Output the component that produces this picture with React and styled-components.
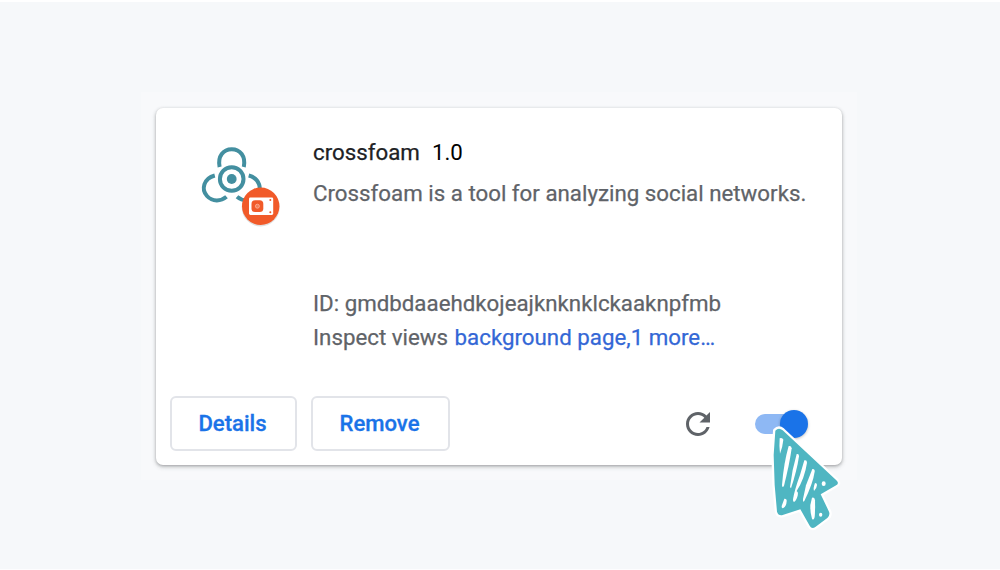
import React from "react";
import styled, { createGlobalStyle } from "styled-components";

const GlobalStyle = createGlobalStyle`
  *, *::before, *::after { box-sizing: border-box; }
  body { margin: 0; background: #fff; font-family: Roboto, "Liberation Sans", sans-serif; }
`;

const Page = styled.main`
  width: 1000px;
  height: 570px;
  border-top: 2px solid #fff;
  border-bottom: 1px solid #fdfdfe;
  background: #f6f8fa;
  display: flex;
  justify-content: center;
  padding: 90px 2px 0 0;
`;

const Backdrop = styled.div`
  width: 716px;
  height: 388px;
  padding: 16px 15px;
  background: #f8f9fb;
`;

const Card = styled.article`
  position: relative;
  height: 357px;
  border-radius: 7px;
  background: #fff;
  box-shadow: 0 1px 3px rgba(60, 64, 67, 0.36), 0 2px 5px rgba(60, 64, 67, 0.2);
  display: flex;
  flex-direction: column;
`;

const Body = styled.div`
  display: flex;
  flex: 1;
  padding: 27px 0 0 37px;
`;

const Logo = styled.svg`
  width: 100px;
  height: 100px;
  margin-left: -3px;
  flex: none;
`;

const Info = styled.div`
  padding-left: 23px;
  color: #5f6368;
  white-space: nowrap;
  font-size: 22.3px;
  -webkit-text-stroke: 0.25px currentColor;
`;

const Line = styled.p`
  margin: 0 0 ${(p) => p.$gap || 0}px;
  height: 34px;
  line-height: 34px;
`;

const Title = styled.h1`
  display: flex;
  gap: 12px;
  margin: 0 0 7px;
  height: 34px;
  line-height: 34px;
  font-size: inherit;
  font-weight: 400;
  color: #202124;
`;

const Version = styled.span`
  color: #000;
  -webkit-text-stroke: 0;
`;

const Link = styled.a`
  margin-left: 1px;
  color: #3367d6;
`;

const Actions = styled.footer`
  display: flex;
  align-items: center;
  gap: 14px;
  height: 55px;
  margin: 0 34px 14px 14px;
`;

const Button = styled.button`
  width: ${(p) => p.$width}px;
  height: 55px;
  padding: 0 2px 2px 0;
  border: 2px solid #e2e4e9;
  border-radius: 6px;
  background: #fff;
  color: #1a73e8;
  font: 500 22.1px/30px Roboto, sans-serif;
  -webkit-text-stroke: 0.3px currentColor;
`;

const Reload = styled.svg`
  width: 36px;
  height: 36px;
  margin-left: auto;
  margin-right: 25px;
`;

const Toggle = styled.div`
  position: relative;
  width: 53px;
  height: 28px;
  display: flex;
  align-items: center;
  justify-content: flex-end;
`;

const Track = styled.span`
  position: absolute;
  left: 0;
  top: 4px;
  width: 46px;
  height: 20px;
  border-radius: 10px;
  background: #8eb8f4;
`;

const Knob = styled.span`
  position: relative;
  width: 28px;
  height: 28px;
  border-radius: 50%;
  background: #1a73e8;
  box-shadow: 0 1px 3px rgba(0, 0, 0, 0.25);
`;

const Cursor = styled.svg`
  position: absolute;
  left: 584px;
  top: 287px;
  width: 120px;
  height: 145px;
`;

function CrossfoamLogo() {
  return (
    <Logo viewBox="0 0 100 100" aria-label="crossfoam">
      <g fill="none" stroke="#438fa0" strokeWidth="4">
        <circle cx="41.7" cy="44" r="11.8" />
        <path d="M29.6 32 C27.4 21 33.5 14.2 41.7 14.2 C50 14.2 56 21 53.8 32" />
        <path d="M24.8 40.5 C13.5 43.5 11 54.5 17 61 C22.5 67 31 66.5 36.5 61.8" />
        <path d="M58.7 40.5 C70 43.5 72.5 54.5 66.5 61 C61 67 52.5 66.5 47 61.8" />
      </g>
      <circle cx="41.7" cy="44" r="4.9" fill="#438fa0" />
      <circle cx="70.7" cy="72.4" r="19" fill="#000" opacity=".12" />
      <circle cx="70.7" cy="71.2" r="18.7" fill="#f15a29" />
      <rect x="59" y="62.4" width="24.2" height="17.6" rx="1.4" fill="#fff" />
      <rect x="61.5" y="65.3" width="11.8" height="11.8" rx="3.6" fill="#f15a29" />
      <circle cx="67.4" cy="71.2" r="2" fill="#f58058" stroke="#fbb49c" strokeWidth=".8" />
      <circle cx="80.3" cy="65" r="1" fill="#f15a29" />
      <circle cx="80.3" cy="77.2" r="1" fill="#f15a29" />
    </Logo>
  );
}

export default function App() {
  return (
    <>
      <GlobalStyle />
      <Page>
        <Backdrop>
          <Card>
            <Body>
              <CrossfoamLogo />
              <Info>
                <Title>
                  <span>crossfoam</span>
                  <Version>1.0</Version>
                </Title>
                <Line $gap={76}>Crossfoam is a tool for analyzing social networks.</Line>
                <Line>ID: gmdbdaaehdkojeajknknklckaaknpfmb</Line>
                <Line>
                  Inspect views <Link>background page,1 more…</Link>
                </Line>
              </Info>
            </Body>
            <Actions>
              <Button $width={127}>Details</Button>
              <Button $width={139}>Remove</Button>
              <Reload viewBox="0 0 24 24" aria-label="Reload">
                <path
                  fill="#5f6368"
                  d="M17.65 6.35C16.2 4.9 14.21 4 12 4c-4.42 0-7.99 3.58-7.99 8s3.57 8 7.99 8c3.73 0 6.84-2.55 7.73-6h-2.08c-.82 2.33-3.04 4-5.65 4-3.31 0-6-2.69-6-6s2.69-6 6-6c1.66 0 3.14.69 4.22 1.78L13 11h7V4l-2.35 2.35z"
                />
              </Reload>
              <Toggle role="switch" aria-checked="true">
                <Track />
                <Knob />
              </Toggle>
            </Actions>
            <Cursor viewBox="0 0 360 435">
              <path
                d="M106 107 Q116 96 128 106 L289 256 Q300 266 286 272 L242 298 L267 350 Q271 361 262 369 L226 396 Q215 403 209 392 L181 343 L128 360 Q115 363 111 350 L104 270 L101 180 Z"
                fill="#4fb6c2"
                stroke="#fff"
                strokeWidth="14"
                strokeLinejoin="round"
                paintOrder="stroke"
              />
              <g fill="#fff">
                <path d="M119 130 Q127 127 130 134 Q128 155 120 176 Q117 153 119 130Z" />
                <path d="M146 153 Q154 151 155 160 Q148 210 132 272 Q127 281 126 270 Q131 205 146 153Z" />
                <path d="M170 177 Q177 175 177 184 Q171 226 153 280 L150 276 Q156 224 170 177Z" />
                <path d="M193 196 Q201 194 201 203 Q194 250 170 288 L162 318 Q160 322 159 314 Q163 286 180 240Z" />
                <path d="M217 222 Q225 221 224 230 Q219 264 193 318 Q188 324 189 312 L198 271Z" />
                <path d="M225 264 Q231 264 231 270 Q230 281 222 288 Q219 279 225 264Z" />
                <path d="M133 311 Q141 310 140 319 Q139 335 130 339 Q124 341 125 333Z" />
                <path d="M168 288 Q176 289 173 302 Q168 320 161 321 Q158 313 168 288Z" />
                <path d="M216 308 Q224 305 225 316 Q226 341 224 366 Q221 378 216 371 Q210 352 211 330Z" />
                <ellipse cx="251" cy="266" rx="6" ry="7" />
                <ellipse cx="242" cy="359" rx="5" ry="6" />
              </g>
            </Cursor>
          </Card>
        </Backdrop>
      </Page>
    </>
  );
}
